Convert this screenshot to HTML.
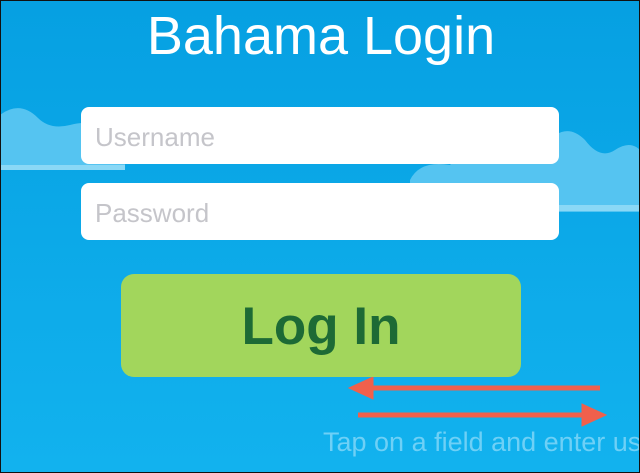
<!DOCTYPE html>
<html><head><style>
body{margin:0;width:640px;height:473px;overflow:hidden;font-family:"Liberation Sans",sans-serif}
.bg{position:absolute;left:0;top:0;width:638px;height:471px;border:1px solid #111;background:linear-gradient(#06a0e2,#12b2ee);overflow:hidden}
.t{position:absolute;left:0;width:640px;top:4px;text-align:center;color:#fff;font-size:54px;font-weight:300}
.f{position:absolute;left:80px;width:478px;height:57px;background:#fff;border-radius:8px;color:#c5c5ca;font-size:26px;box-sizing:border-box;padding:15px 0 0 14px}
.b{position:absolute;left:120px;top:273px;width:400px;height:103px;background:#a2d65c;border-radius:13px;color:#1d6a35;font-weight:bold;font-size:53px;text-align:center;line-height:106px}
.h{position:absolute;left:322px;top:426px;color:#6ed0f6;font-size:27px;white-space:nowrap}
</style></head><body><div class="bg">
<svg width="640" height="473" style="position:absolute;left:-1px;top:-1px">
<g fill="#55c4f1">
<path d="M0 115 Q20 100 38 118 Q50 130 70 125 Q95 118 105 135 L125 150 L125 170 L0 170Z"/>
<path d="M410 180 Q420 160 450 165 Q470 140 500 150 Q520 130 545 145 Q565 120 585 140 Q600 160 615 150 Q630 140 640 150 L640 212 L410 212Z"/>
</g>
<rect x="0" y="165" width="125" height="5" fill="#8ad8f6"/>
<rect x="555" y="205" width="85" height="6" fill="#8ad8f6"/>
<g fill="#f0604c" stroke="#f0604c">
<line x1="370" y1="388" x2="600" y2="388" stroke-width="5"/>
<path d="M349 388 L373 377 L373 399Z"/>
<line x1="358" y1="415" x2="585" y2="415" stroke-width="5"/>
<path d="M606 415 L582 404 L582 426Z"/>
</g>
</svg>
<div class="t">Bahama Login</div>
<div class="f" style="top:106px">Username</div>
<div class="f" style="top:182px">Password</div>
<div class="b">Log In</div>
<div class="h">Tap on a field and enter username</div>
</div></body></html>
